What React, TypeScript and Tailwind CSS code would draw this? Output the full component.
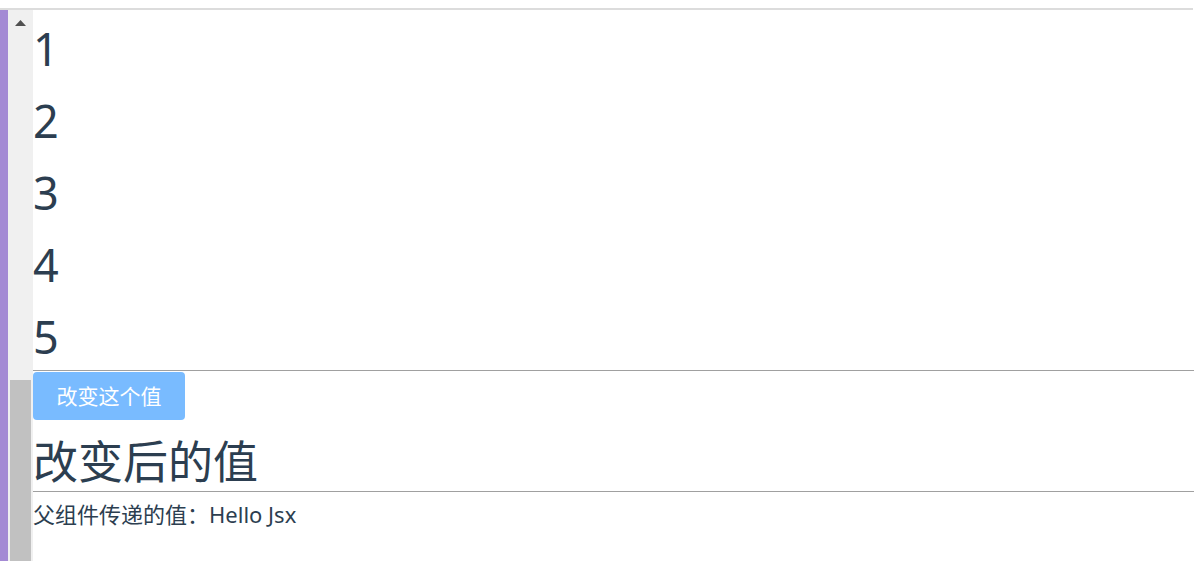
import React from "react";

export default function App() {
  const font = { fontFamily: '"Noto Sans", "Noto Sans CJK SC", sans-serif' };
  return (
    <div className="w-[1194px] h-[561px] overflow-hidden bg-white text-[#2c3e50]" style={font}>
      <div className="h-[8px] bg-white" />
      <div className="h-[2px] w-[1193px] bg-[#dcdcdc]" />
      <div className="flex h-[551px]">
        <div className="w-[8px] bg-[#a48ad4]" />
        <div className="w-[25px] bg-[#f0f0f0] flex flex-col">
          <div className="h-[370px] flex justify-center pt-[10px]">
            <svg width="11" height="6" viewBox="0 0 11 6">
              <polygon points="5.5,0 11,6 0,6" fill="#505050" />
            </svg>
          </div>
          <div className="flex-1 ml-[2px] w-[21px] bg-[#c1c1c1]" />
        </div>
        <div className="flex-1 flex flex-col">
          {[1, 2, 3, 4, 5].map((n) => (
            <div key={n} className="h-[72px] text-[45px] leading-[72px] pt-[3px]">
              {n}
            </div>
          ))}
          <div className="h-px bg-[#a0a0a0]" />
          <div className="pt-[1px]">
            <button className="w-[152px] h-[48px] rounded-[4px] bg-[#79bbff] text-white text-[21px] leading-[48px]">
              改变这个值
            </button>
          </div>
          <div className="h-[71px] text-[45px] leading-[71px] pt-[6px]">改变后的值</div>
          <div className="h-px bg-[#a0a0a0]" />
          <div className="text-[22px] leading-[44px]">父组件传递的值：Hello Jsx</div>
        </div>
      </div>
    </div>
  );
}
